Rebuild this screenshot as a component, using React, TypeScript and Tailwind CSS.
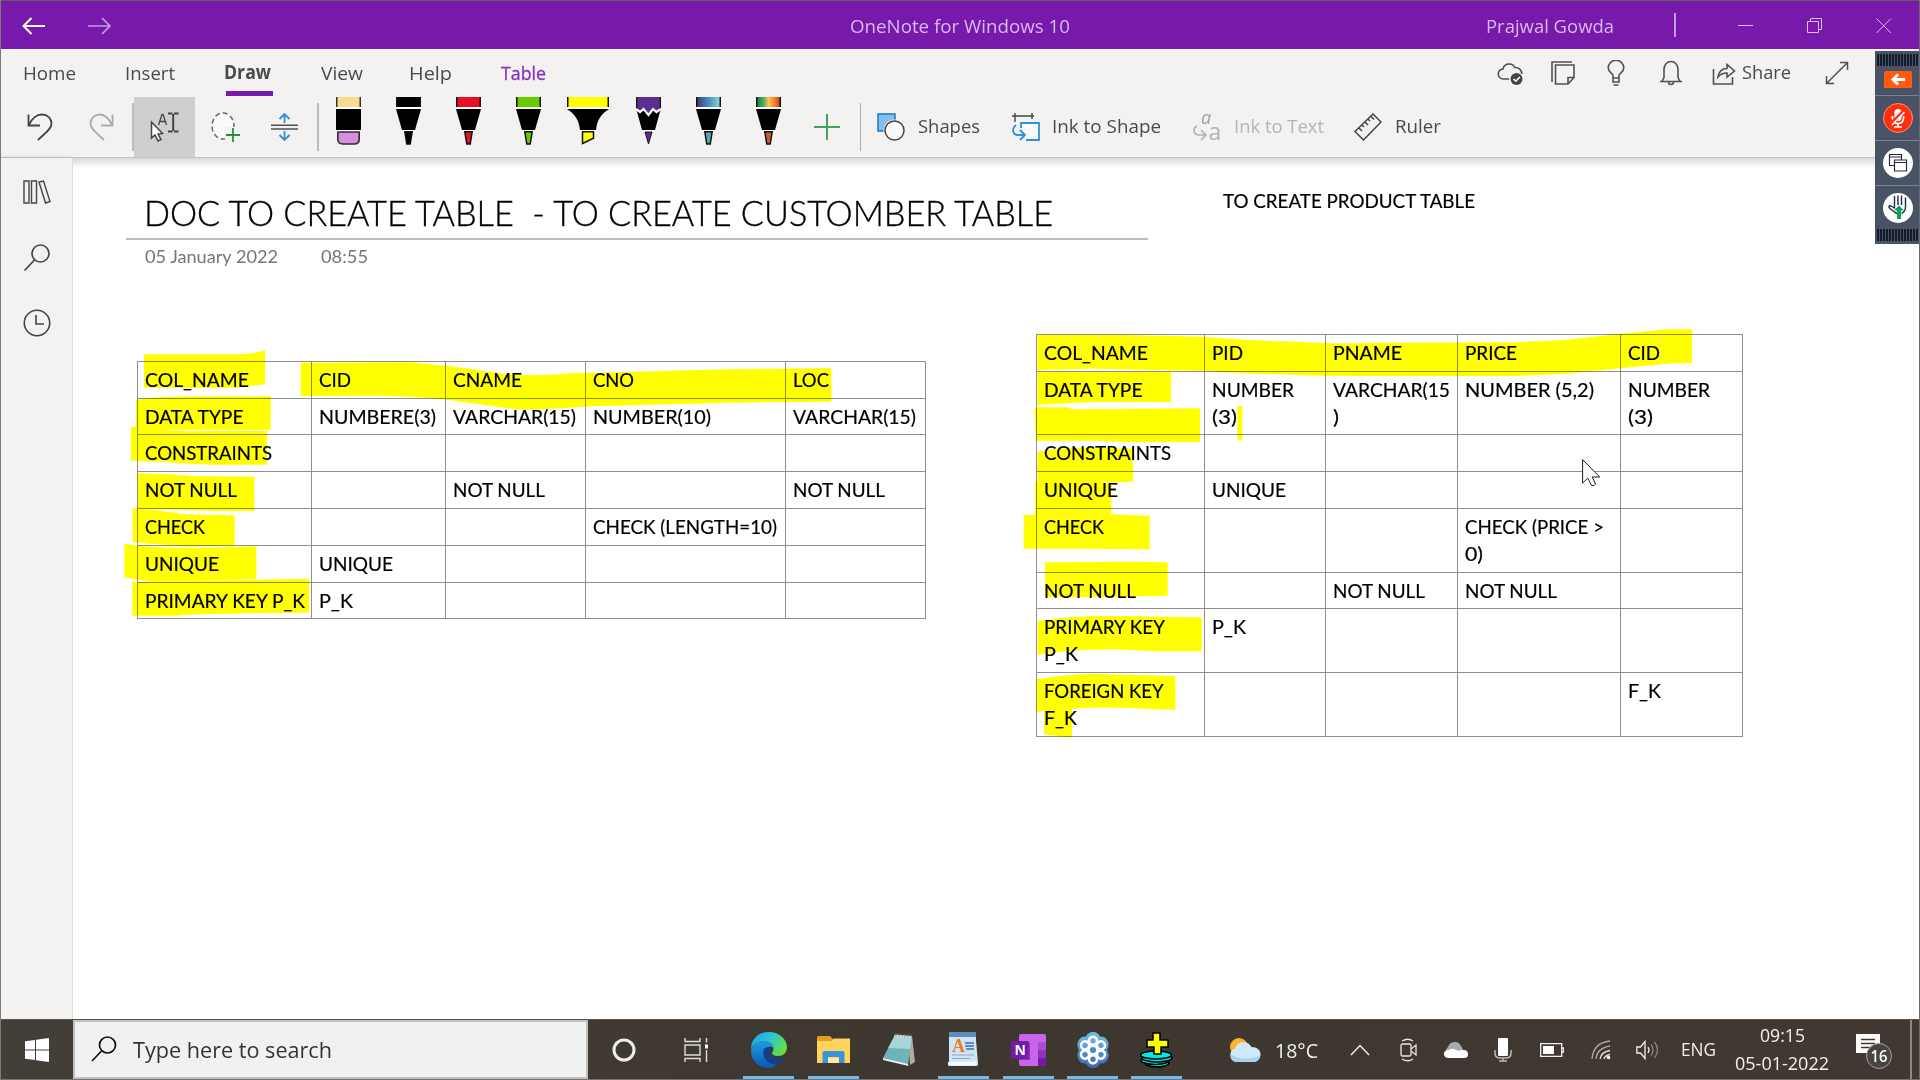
import React, { useLayoutEffect, useRef, useState } from "react";

const UI = "font-['Open_Sans','Noto_Sans',sans-serif]";
const NOTE = "font-['Lato','Noto_Sans',sans-serif]";

/* A single line of text condensed or widened to an exact advance width. */
function Fit({ w, className = "", children }: { w: number; className?: string; children: string }) {
  const ref = useRef<HTMLSpanElement>(null);
  const [scale, setScale] = useState(1);
  useLayoutEffect(() => {
    if (ref.current && ref.current.offsetWidth) {
      ref.current.style.transform = "none";
      setScale(w / ref.current.getBoundingClientRect().width);
    }
  }, [w, children]);
  return (
    <span className={"block shrink-0 " + className} style={{ width: w }}>
      <span ref={ref} className="block w-max origin-left whitespace-pre" style={{ transform: `scaleX(${scale})` }}>
        {children}
      </span>
    </span>
  );
}

function TitleBar() {
  return (
    <header className="flex h-[49px] shrink-0 items-center border-t border-[#5f5f5f] bg-[#7719aa] text-[#d9b8ec]">
      <svg className="ml-[22px] mt-px h-[18px] w-6" viewBox="0 0 24 18" fill="none" stroke="#fff" strokeWidth="2">
        <path d="M23 9H2M9.500 1L1.500 9l8 8" />
      </svg>
      <svg className="ml-[42px] mt-px h-[18px] w-6" viewBox="0 0 24 18" fill="none" stroke="#c79be0" strokeWidth="1.700">
        <path d="M0 9h22M14 1l8 8-8 8" />
      </svg>
      <Fit w={220} className="ml-[738px] mt-0.5 text-[18px]">OneNote for Windows 10</Fit>
      <Fit w={128} className="ml-[416px] mt-0.5 text-[18px]">Prajwal Gowda</Fit>
      <span className="ml-[60px] h-6 w-0.5 bg-[#c79be0]" />
      <svg className="ml-[62px] mt-0.5 h-4 w-4" viewBox="0 0 16 16" stroke="#dcc0ec"><path d="M0 7.500h15" /></svg>
      <svg className="ml-[53px] mt-0.5 h-4 w-4" viewBox="0 0 16 16" fill="none" stroke="#dcc0ec"><path d="M.5 3.500h11v11H.5zM3.500 3.500v-3h11v11h-3" /></svg>
      <svg className="ml-[53px] mt-0.5 h-4 w-4" viewBox="0 0 16 16" fill="none" stroke="#dcc0ec"><path d="M.5.5l14.500 14.500M15 .5L.5 15" /></svg>
    </header>
  );
}

function Tabs() {
  return (
    <div className="flex h-12 shrink-0 items-center text-[19px] text-[#4a4a4a]">
      <Fit w={53} className="ml-[23px]">Home</Fit>
      <Fit w={50} className="ml-[49px]">Insert</Fit>
      <div className="ml-[49px] flex h-full w-12 flex-col">
        <Fit w={47} className="mt-[10px] text-[19px] font-bold leading-[26px]">Draw</Fit>
        <span className="ml-[2px] mt-[6px] h-[5px] w-[47px] shrink-0 bg-[#7719aa]" />
      </div>
      <Fit w={42} className="ml-[49px]">View</Fit>
      <Fit w={43} className="ml-[46px]">Help</Fit>
      <Fit w={45} className="ml-[49px] text-[#8a2dc0] [-webkit-text-stroke:0.3px]">Table</Fit>
      <svg className="ml-[951px] h-6 w-[27px]" viewBox="0 0 27 24" fill="none" stroke="#505050" strokeWidth="1.600">
        <path d="M12 18H6.500a5 5 0 0 1-.6-10A6.500 6.500 0 0 1 18 6.500c3.500-.2 7 2.500 6.800 6.500" />
        <circle cx="19.500" cy="18" r="6" fill="#444" stroke="none" />
        <path d="M16.500 18l2.300 2.200 4-4.200" stroke="#fff" />
      </svg>
      <svg className="ml-[27px] h-6 w-6" viewBox="0 0 24 24" fill="none" stroke="#505050" strokeWidth="1.600">
        <path d="M1 21V1h20M4.500 4H23v12.500L17 23H4.500zM23 16.500h-6V23" />
      </svg>
      <svg className="ml-8 h-[26px] w-[18px]" viewBox="0 0 18 26" fill="none" stroke="#505050" strokeWidth="1.600">
        <path d="M6 18v-2.500C5.500 13 1.200 12 1.200 7.800a7.800 7.500 0 0 1 15.600 0c0 4.200-4.300 5.200-4.800 7.700V22H6v-4h6M6.500 25h5" />
      </svg>
      <svg className="ml-[34px] h-[26px] w-6" viewBox="0 0 24 26" fill="none" stroke="#505050" strokeWidth="1.600">
        <path d="M1 21.500h22M3 21.500l2-4V9a7 7.500 0 0 1 14 0v8.500l2 4M9.500 22a2.500 2.500 0 0 0 5 0" />
      </svg>
      <svg className="ml-[29px] h-[26px] w-6" viewBox="0 0 24 26" fill="none" stroke="#505050" strokeWidth="1.600">
        <path d="M1.500 9v15h19v-7M6 17c1-6 5-8.500 9-8.500V4.500L22.500 11 15 17v-4c-4 0-6.500 1-9 4z" />
      </svg>
      <Fit w={49} className="-mt-0.5 ml-[6px] text-[18px]">Share</Fit>
      <svg className="ml-[34px] h-6 w-6" viewBox="0 0 24 24" fill="none" stroke="#505050" strokeWidth="1.500">
        <path d="M1.500 22.500L22.500 1.500M15 1.500h7.500V9M1.500 15v7.500H9" />
      </svg>
    </div>
  );
}

function Pen({ fill, tip, className = "mr-[35px]" }: { fill: string; tip: string; className?: string }) {
  return (
    <svg className={"h-12 w-[25px] shrink-0 " + className} viewBox="0 0 25 48">
      <path d="M0 0h25v10H0z" fill="#111" />
      <path d="M1.500 0h22v10h-22z" fill={fill} />
      <path d="M0 10h25v1.800H0zM6 33h13v1.800H6z" fill="#fff" />
      <path d="M0 12h25l-6 21H6z" />
      <path d="M8.800 34.800h7.400l-2 12.200h-3.400z" fill={tip} stroke="#111" strokeWidth="1.500" />
    </svg>
  );
}

function Pens() {
  return (
    <div className="ml-[17px] flex h-full shrink-0 items-start">
      <svg className="mr-[35px] h-12 w-[25px]" viewBox="0 0 25 48">
        <path d="M0 0h25v10H0z" fill="#333" />
        <path d="M1.500 0h22v10h-22z" fill="#f8da90" />
        <path d="M0 10h25v2H0zM0 33h25v2H0z" fill="#fff" />
        <path d="M0 12h25v21H0z" />
        <path d="M1.800 35h21.400v7q0 5-5 5H6.800q-5 0-5-5z" fill="#d490da" stroke="#352838" strokeWidth="1.600" />
      </svg>
      <Pen fill="#000" tip="#000" />
      <Pen fill="#e81123" tip="#e81123" />
      <Pen fill="#66cc00" tip="#66cc00" className="mr-[26px]" />
      <svg className="mr-[27px] h-12 w-[42px]" viewBox="0 0 42 48">
        <path d="M0 0h42v10H0z" fill="#111" />
        <path d="M1.500 0h39v10h-39z" fill="#ff0" />
        <path d="M0 10h42v2H0zM13 33h16v2H13z" fill="#fff" />
        <path d="M0 12h42c-8 5-12 11-13 21H13C12 23 8 17 0 12z" />
        <path d="M15.500 34.800h11v6.500l-11 5.200z" fill="#ff0" stroke="#111" strokeWidth="1.500" />
      </svg>
      <svg className="mr-[35px] h-12 w-[25px]" viewBox="0 0 25 48">
        <path d="M0 11h25l-6 22H6z" />
        <path d="M0 0h25v14l-4.500 1-3.500-3-4.500 6-5-6L4 15l-4-1z" fill="#5c2d91" />
        <path d="M.5 0v12M24.500 0v12" stroke="#111" strokeWidth="1.500" />
        <path d="M0 12l4 3 3.500-3 5 6 4.500-6 3.500 3 4.500-3" fill="none" stroke="#fff" strokeWidth="2.200" />
        <path d="M6 33h13v2H6z" fill="#fff" />
        <path d="M9 35h7l-3.500 12z" fill="#5c2d91" stroke="#20102f" />
      </svg>
      <svg width="0" height="0" className="absolute">
        <defs>
          <linearGradient id="galaxy"><stop offset="0" stopColor="#4a3a72" /><stop offset=".4" stopColor="#3f7fb5" /><stop offset="1" stopColor="#7fd4d8" /></linearGradient>
          <linearGradient id="rainbow"><stop offset="0" stopColor="#0a8a50" /><stop offset=".3" stopColor="#5fae60" /><stop offset=".5" stopColor="#fbc550" /><stop offset=".75" stopColor="#f58a2a" /><stop offset="1" stopColor="#c84a20" /></linearGradient>
        </defs>
      </svg>
      <Pen fill="url(#galaxy)" tip="#55aab8" />
      <Pen fill="url(#rainbow)" tip="#b9603a" />
    </div>
  );
}

function Toolbar() {
  return (
    <div className="flex h-[60px] shrink-0 items-center text-[19px] text-[#4a4a4a]">
      <svg className="ml-[27px] h-7 w-[26px]" viewBox="0 0 26 28" fill="none" stroke="#444" strokeWidth="1.800">
        <path d="M1.500 1.500V12.500H13M2 12C4.500 6 9.500 1.500 15 1.500c5.500 0 9.500 4 9.500 9 0 6-7 10-13.500 16.500" />
      </svg>
      <svg className="ml-[36px] h-7 w-[26px]" viewBox="0 0 26 28" fill="none" stroke="#ababab" strokeWidth="1.800">
        <path d="M23.500 1.500V12.500H12M23 12C20.500 6 15.500 1.500 11 1.500c-5.500 0-9.500 4-9.500 9 0 6 7 10 13.500 16.500" />
      </svg>
      <span className="ml-[17px] h-12 w-0.5 bg-[#bdbdbd]" />
      <div className="flex h-full w-[61px] items-center justify-center bg-[#d0cfce]">
        <svg className="h-[30px] w-[30px]" viewBox="0 0 30 30" fill="none" stroke="#444" strokeWidth="1.500">
          <path d="M8.500 13L12 2.500h1L16.500 13M9.700 9.500h5.500" strokeWidth="1.300" />
          <path d="M18 1.500h4.500M24 1.500h4.500M18 19.500h4.500M24 19.500h4.500M23.200 2v17" strokeWidth="2" />
          <path d="M1.500 10v16l3.500-3 3 6 3-1.500-3-5.500 4.500-.5z" fill="#fff" />
        </svg>
      </div>
      <svg className="ml-4 h-[30px] w-[30px]" viewBox="0 0 30 30" fill="none">
        <ellipse cx="12" cy="14" rx="11" ry="13" fill="#fafafa" stroke="#666" strokeWidth="1.500" strokeDasharray="5 3" />
        <path d="M14 15h16v15H14z" fill="#f3f2f1" />
        <path d="M22 16v14M15 23h14" stroke="#229044" strokeWidth="1.800" />
      </svg>
      <svg className="ml-[30px] h-7 w-[27px]" viewBox="0 0 27 28" fill="none" stroke="#2c93d5" strokeWidth="1.800">
        <path d="M13.500 10V1M8.500 6l5-5 5 5M13.500 18v9M8.500 22l5 5 5-5" />
        <path d="M0 12.200h27M0 16h27" stroke="#505050" strokeWidth="1.600" />
      </svg>
      <span className="ml-[19px] h-12 w-0.5 bg-[#bdbdbd]" />
      <Pens />
      <svg className="-ml-0.5 h-[26px] w-[26px]" viewBox="0 0 26 26" stroke="#3fa55d" strokeWidth="2"><path d="M0 13h26M13 0v26" /></svg>
      <span className="ml-[20px] h-12 w-px bg-[#b0b0b0]" />
      <svg className="ml-4 h-7 w-7" viewBox="0 0 28 28">
        <path d="M1 1h17v17H1z" fill="#83beec" stroke="#2176c0" strokeWidth="1.500" />
        <ellipse cx="17.500" cy="17.500" rx="11" ry="11" fill="#f3f2f1" />
        <ellipse cx="17.500" cy="17.500" rx="9.500" ry="9.500" fill="#fafafa" stroke="#444" strokeWidth="1.500" />
      </svg>
      <Fit w={62} className="ml-[13px] -mt-px">Shapes</Fit>
      <svg className="ml-[32px] h-7 w-7" viewBox="0 0 28 28" fill="none" stroke="#2c93d5" strokeWidth="1.800">
        <path d="M0 3h22M3 0v9M20 0v6" stroke="#444" strokeWidth="1.400" />
        <path d="M10 15V10h17v17H14" fill="#fafafa" stroke="none" />
        <path d="M9 15V10h18v17H14" />
        <path d="M4 12c-5 4-3 10 2 10h6M8 17l5 5-5 5" />
      </svg>
      <Fit w={109} className="ml-3 -mt-px">Ink to Shape</Fit>
      <svg className="ml-[32px] h-7 w-7 overflow-visible" viewBox="0 0 28 28" fill="none" stroke="#b3b3b3" strokeWidth="2">
        <path d="M4 13c-5 3-3 9 2 9h6M8 17l5 5-5 5" strokeWidth="1.700" />
        <text x="8" y="11" fill="#a0a0a0" stroke="none" fontSize="18" fontStyle="italic">a</text>
        <text x="15.500" y="27" fill="#b3b3b3" stroke="none" fontSize="23">a</text>
      </svg>
      <Fit w={90} className="ml-[13px] -mt-px text-[#b5b5b5]">Ink to Text</Fit>
      <svg className="ml-[30px] h-7 w-7" viewBox="0 0 28 28" fill="none" stroke="#444" strokeWidth="1.500">
        <path d="M1 18.500L19 1l8 8-17.500 18zM5 15l3 3M8 12l2 2M11 9l3 3M14 6l2 2M17 3.500l3 3" />
      </svg>
      <Fit w={46} className="ml-[13px] -mt-px">Ruler</Fit>
    </div>
  );
}

function Sidebar() {
  return (
    <aside className="flex w-[73px] shrink-0 flex-col items-start border-l border-r border-l-[#8a8a8a] border-r-[#dcdbda] bg-[#f3f2f1] pl-[22px] pt-[22px] shadow-[0_0_4px_rgba(0,0,0,0.15)]">
      <svg className="h-6 w-7" viewBox="0 0 28 24" fill="none" stroke="#444" strokeWidth="1.400">
        <path d="M1 1h5v22H1zM8.500 1h5v22h-5zM16 2l4.500-1 6.500 20.500-4.500 1.500z" />
      </svg>
      <svg className="mt-10 h-7 w-7" viewBox="0 0 28 28" fill="none" stroke="#444" strokeWidth="1.700">
        <circle cx="17.500" cy="9.500" r="8.500" /><path d="M11.500 16L1.500 26.500" />
      </svg>
      <svg className="mt-[37px] h-7 w-7" viewBox="0 0 28 28" fill="none" stroke="#444" strokeWidth="1.600">
        <circle cx="14" cy="14" r="12.700" /><path d="M13 6v9h8" />
      </svg>
    </aside>
  );
}

const WIDTHS: Record<string, number> = {
  COL_NAME: 104, CID: 32, CNAME: 69, CNO: 41, LOC: 36, "DATA TYPE": 98.5, "NUMBERE(3)": 117,
  "VARCHAR(15)": 123, "NUMBER(10)": 118, CONSTRAINTS: 127, "NOT NULL": 92, CHECK: 60,
  "CHECK (LENGTH=10)": 184, UNIQUE: 74, "PRIMARY KEY P_K": 160, P_K: 34, PID: 31, PNAME: 69,
  PRICE: 52, NUMBER: 82, "(3)": 25, "VARCHAR(15": 117, ")": 6, "NUMBER (5,2)": 129,
  "CHECK (PRICE >": 139, "0)": 18, "PRIMARY KEY": 121, "FOREIGN KEY": 119.5, F_K: 33,
};

const CUSTOMER = [
  ["COL_NAME", "CID", "CNAME", "CNO", "LOC"],
  ["DATA TYPE", "NUMBERE(3)", "VARCHAR(15)", "NUMBER(10)", "VARCHAR(15)"],
  ["CONSTRAINTS", "", "", "", ""],
  ["NOT NULL", "", "NOT NULL", "", "NOT NULL"],
  ["CHECK", "", "", "CHECK (LENGTH=10)", ""],
  ["UNIQUE", "UNIQUE", "", "", ""],
  ["PRIMARY KEY P_K", "P_K", "", "", ""],
];

const PRODUCT = [
  ["COL_NAME", "PID", "PNAME", "PRICE", "CID"],
  ["DATA TYPE", "NUMBER\n(3)", "VARCHAR(15\n)", "NUMBER (5,2)", "NUMBER\n(3)"],
  ["CONSTRAINTS", "", "", "", ""],
  ["UNIQUE", "UNIQUE", "", "", ""],
  ["CHECK", "", "", "CHECK (PRICE >\n0)", ""],
  ["NOT NULL", "", "NOT NULL", "NOT NULL", ""],
  ["PRIMARY KEY\nP_K", "P_K", "", "", ""],
  ["FOREIGN KEY\nF_K", "", "", "", "F_K"],
];

function NoteTable({ rows, layout }: { rows: string[][]; layout: string }) {
  return (
    <div className={"grid w-max border-l border-t border-[#8f8f8f] text-[19.500px] leading-[27px] text-black [-webkit-text-stroke:0.2px] " + layout}>
      {rows.flat().map((cell, i) => (
        <div key={i} className="border-b border-r border-[#8f8f8f] pl-[6.600px] pt-[3.500px]">
          {cell && cell.split("\n").map((line) => <Fit key={line} w={WIDTHS[line]}>{line}</Fit>)}
        </div>
      ))}
    </div>
  );
}

/* Highlighter strokes and pointer, laid over the note canvas. */
function Ink() {
  return (
    <>
      <svg className="pointer-events-none absolute left-0 top-0 h-[861px] w-[1847px] mix-blend-multiply" viewBox="73 158 1847 861" fill="#ffff00">
        <g transform="translate(110 330) scale(.33333)">
          <path d="M102 73H380Q440 70 465 60V163Q430 166 380 173H102z" />
          <path d="M572 98L900 97Q1000 105 1090 118Q1180 134 1250 136Q1340 134 1390 129L1450 128L1850 118L2164 114V215L1860 218L1440 229Q1300 240 1220 238Q1120 225 1000 208Q900 197 800 197L572 198z" />
          <path d="M78 210Q130 200 240 199H482V299H180Q120 303 85 313H78z" />
          <path d="M63 291H82Q130 300 230 304L471 303V404H300Q200 400 170 396L63 392z" />
          <path d="M83 430Q200 433 240 438L433 440V543H310Q200 538 83 536z" />
          <path d="M68 534Q180 545 225 553L374 556V646L240 650Q150 645 68 636z" />
          <path d="M43 641Q120 652 240 655L439 649V746L140 757Q90 750 43 742z" />
          <path d="M67 756L400 750L597 746V848L420 850Q250 852 200 857H67z" />
        </g>
        <g transform="translate(1010 320) scale(.33333)">
          <path d="M82 45H360L583 50Q700 62 870 65Q950 72 1110 68L1510 67L1660 60L1830 42L1970 28H2046V129L1990 130L1830 145L1660 162L1510 168H1110L940 167L700 160L583 153L250 146L82 150z" />
          <path d="M82 156H483V246H270Q130 250 82 255z" />
          <path d="M74 262H170L190 268L570 265V366H420Q340 366 250 362H78z" />
          <path d="M682 258H697V361H682z" />
          <path d="M82 395Q150 382 240 383L369 386V485L270 488L304 494V583L419 587V688L180 686H41V585H76V486H82z" />
          <path d="M105 727L370 725L473 727V827L300 831H105z" />
          <path d="M83 903Q180 888 300 888L575 892V994H430Q250 980 83 1004z" />
          <path d="M80 1078Q200 1058 300 1063L496 1068V1169L430 1168Q300 1158 186 1166V1251H160L102 1243V1172L80 1176z" />
        </g>
      </svg>
      <svg className="pointer-events-none absolute left-[1509px] top-[301px] h-[28px] w-[20px]" viewBox="0 0 20 28">
        <path d="M.6.6v23.500l5.200-5 3.700 7.400h2.500l1.500-1.500-3.300-7h7.500z" fill="#fff" stroke="#1a1a30" />
      </svg>
    </>
  );
}

function Canvas() {
  return (
    <main className={"relative flex min-w-0 flex-1 bg-white " + NOTE}>
      <section className="w-[1075px] shrink-0 pt-[23px]">
        <div className="ml-[53px] h-[59px] w-[1022px] border-b-2 border-[#bdbdbd] pl-[18px]">
          <Fit w={909} className="text-[35px] font-light leading-[62px] text-black [-webkit-text-stroke:0.35px]">DOC TO CREATE TABLE  - TO CREATE CUSTOMBER TABLE</Fit>
        </div>
        <div className="ml-[72px] mt-[5px] flex text-[17.500px] leading-[24px] text-[#757575]">
          <Fit w={133}>05 January 2022</Fit>
          <Fit w={47} className="ml-[43px]">08:55</Fit>
        </div>
        <div className="ml-[64px] mt-[92px]">
          <NoteTable rows={CUSTOMER} layout="grid-cols-[174px_134px_140px_200px_140px] grid-rows-[37px_36px_37px_37px_37px_37px_36px]" />
        </div>
      </section>
      <section className="-ml-[112px] pt-[29px]">
        <Fit w={252} className="ml-[187px] text-[19.500px] leading-[27px] text-black [-webkit-text-stroke:0.2px]">TO CREATE PRODUCT TABLE</Fit>
        <div className="mt-[120px]">
          <NoteTable rows={PRODUCT} layout="grid-cols-[168px_121px_132px_163px_122px] grid-rows-[37px_63px_37px_37px_64px_36px_64px_64px]" />
        </div>
      </section>
      <Ink />
      <div className="pointer-events-none absolute inset-x-0 top-0 h-2.5 bg-gradient-to-b from-black/15 to-transparent" />
    </main>
  );
}

const STRIPES = "ml-[2px] h-3 w-[42px] bg-[repeating-linear-gradient(90deg,#141c2a_0_2px,#495266_2px_3px)]";

function MeetingDock() {
  return (
    <div className="absolute left-[1875px] top-[51px] flex h-[193px] w-11 flex-col bg-[#4a5366] pt-[3px]">
      <div className={STRIPES} />
      <div className="flex h-[30px] items-center justify-center border-b border-[#76839a] pb-[5px] pl-[2px] pt-[2px]">
        <svg className="h-[17px] w-7" viewBox="0 0 28 17"><rect width="28" height="17" rx="1.500" fill="#ff5a12" /><path d="M21 8.500H9M14 3.500l-5 5 5 5" fill="none" stroke="#fff" strokeWidth="2.800" /></svg>
      </div>
      <div className="flex h-[45px] items-center justify-center border-b border-[#76839a] pl-[2px]">
        <svg className="h-[30px] w-[30px]" viewBox="0 0 30 30">
          <circle cx="15" cy="15" r="14.500" fill="#ff3010" stroke="#ff8a70" />
          <rect x="11.500" y="6" width="7" height="12" rx="3.500" fill="#fff" />
          <path d="M9.500 13v2.500a5.500 5 0 0 0 11 0V13M15 20.500V24M11 24h8" fill="none" stroke="#fff" strokeWidth="1.700" />
          <path d="M8 21L21 8" stroke="#ff3010" strokeWidth="3.500" /><path d="M9 22L21.500 9" stroke="#fff" strokeWidth="1.500" />
        </svg>
      </div>
      <div className="flex h-[45px] items-center justify-center border-b border-[#76839a] pl-[2px]">
        <svg className="h-[30px] w-[30px]" viewBox="0 0 30 30" stroke="#252a45" strokeWidth="1.200">
          <circle cx="15" cy="15" r="15" fill="#fff" stroke="none" />
          <path d="M6.500 6.500h12v11h-12zM6.500 9h12" fill="#fff" /><path d="M11.500 12h12v11h-12zM11.500 14.500h12" fill="#fff" />
        </svg>
      </div>
      <div className="flex h-[43px] items-center justify-center pl-[2px]">
        <svg className="h-[30px] w-[30px]" viewBox="0 0 30 30" fill="none" stroke="#252a45" strokeWidth="1.400">
          <circle cx="15" cy="15" r="15" fill="#fff" stroke="none" />
          <path d="M11.500 3v12l-3.500-2c-2-1-3 1-1 2.500l5 4 3 1.500M15 2.500V12M18.500 2.500V12M22.500 4.500V14c0 4-2 5.500-4 6.500" />
          <path d="M14 26v-8.500h-3l5-5 5 5h-3V26z" fill="#00a651" stroke="none" />
        </svg>
      </div>
      <div className={STRIPES} />
    </div>
  );
}

function AppButton({ active, ml, children }: { active?: boolean; ml: string; children: React.ReactNode }) {
  return (
    <div className={"relative flex h-full w-[51px] shrink-0 items-center justify-center " + ml}>
      {children}
      {active && <span className="absolute inset-x-0 bottom-0 h-[3px] bg-[#76b9ed]" />}
    </div>
  );
}

function TaskbarApps() {
  return (
    <div className="flex h-full items-center">
      <svg className="ml-[23px] h-6 w-6" viewBox="0 0 24 24" fill="none"><circle cx="12" cy="12" r="10" stroke="#eee" strokeWidth="3" /></svg>
      <svg className="ml-[48px] h-6 w-[26px]" viewBox="0 0 26 24" fill="none" stroke="#ddd" strokeWidth="1.400">
        <path d="M1 0v3.500h15V0M1 7h15v10H1zM1 24v-3.500h15V24M22.500 0v4.500M22.500 12v12" /><path d="M22.500 6.500v4" stroke="#fff" strokeWidth="3" />
      </svg>
      <AppButton active ml="ml-[33px]">
        <svg className="h-9 w-9" viewBox="0 0 36 36">
          <defs>
            <linearGradient id="eg" x1="0" y1="0" x2="1" y2=".5"><stop stopColor="#1d9fe0" /><stop offset=".5" stopColor="#2cc3d8" /><stop offset="1" stopColor="#62de4a" /></linearGradient>
            <linearGradient id="eb" x1="0" y1="0" x2="0" y2="1"><stop stopColor="#1e9de0" /><stop offset="1" stopColor="#0b59b0" /></linearGradient>
          </defs>
          <path d="M0 18C0 6 8 0 18 0c11 0 18 8 18 15 0 6-4 9-9 9-4 0-6-1.500-6-3 0-1 1.500-2 1.500-4.500C22.500 12 18 9 13 9 6 9 1 13 0 18z" fill="url(#eg)" />
          <path d="M0 19C1 12 7 9 13 9c6 0 9.500 3.500 9.500 7.500-2-3-9-2.500-9 4.500 0 7 6 12 13 11C23 35 20 36 17 36 8 36 0 29 0 19z" fill="url(#eb)" />
          <path d="M13 17c-3 8 3 15 12 15.500 4-1 7-4 8.500-6.500.3-.6-.3-1-.8-.8C28 27.500 21 26.500 19 21c-.7-2 0-4 1-5-3-1-6-.5-7 1z" fill="#123f88" />
        </svg>
      </AppButton>
      <AppButton active ml="ml-[14px]">
        <svg className="h-7 w-[33px]" viewBox="0 0 33 28">
          <path d="M0 1.500Q0 0 1.500 0H13l3 3H32q1 0 1 1v22H0z" fill="#e09f1c" /><path d="M0 5h14l3-2.500h16V27H0z" fill="#ffd35c" />
          <path d="M5.500 27V17q0-2 2-2h18q2 0 2 2v10H22v-6H11v6z" fill="#3a94dc" /><path d="M11 22h11v5H11z" fill="#ffe9a0" />
        </svg>
      </AppButton>
      <AppButton ml="ml-[14px]">
        <svg className="h-[33px] w-8" viewBox="0 0 32 33">
          <path d="M25 3h4l3 26-5 3z" fill="#b3ab98" />
          <path d="M12 2l17 2-4 28L0 25z" fill="#6fb3bb" />
          <path d="M12 2l17 2-2 12L5 15z" fill="#b5dfe2" opacity=".8" />
          <path d="M0 25l25 6 .500 2L0 27z" fill="#e9f3f3" />
          <path d="M12 1.500L29 3l-.500 2.500L11 4z" fill="#dce5e5" />
          <path d="M13 0v4M16 .3v4M19 .6v4M22 .8v4M25 1v4M28 1.500v4" stroke="#777" strokeWidth=".8" />
        </svg>
      </AppButton>
      <AppButton active ml="ml-[14px]">
        <svg className="h-[35px] w-[31px]" viewBox="0 0 31 35">
          <path d="M1 0h27v8l2 23q0 3-3 3H1q-2-1 0-4z" fill="#cfe4f6" /><path d="M1 0h27v5H1z" fill="#5d8cb8" /><path d="M0 30l28-.5 2 4H2q-3-1-2-3.500z" fill="#f5fafe" />
          <text x="4" y="20" fontSize="18" fontWeight="bold" fill="#ee7d1b" className="font-['Liberation_Serif',serif]">A</text>
          <path d="M17 11h9M17 14h9M18 17h8" stroke="#3f70ad" strokeWidth="1.600" /><path d="M4 23h22M4 26.500h18" stroke="#88a6c4" />
        </svg>
      </AppButton>
      <AppButton active ml="ml-[14px]">
        <svg className="h-8 w-[35px]" viewBox="0 0 35 32">
          <rect x="8" width="27" height="32" rx="2" fill="#ca64ea" /><path d="M27 8h8v8h-8z" fill="#ae4bd5" /><path d="M27 16h8v8h-8z" fill="#9332bf" /><path d="M27 24h8v6q0 2-2 2h-6z" fill="#7719aa" />
          <path d="M8 7h8q3 0 3 3v16H8z" fill="#8d35b5" /><rect y="7" width="17.500" height="18" rx="1.500" fill="#7719aa" />
          <text x="3.500" y="21" fontSize="14" fontWeight="bold" fill="#fff">N</text>
        </svg>
      </AppButton>
      <AppButton active ml="ml-[13px]">
        <svg className="h-9 w-9" viewBox="0 0 36 36">
          <defs><linearGradient id="gt" gradientUnits="userSpaceOnUse" x1="0" y1="0" x2="0" y2="36"><stop stopColor="#6cc3e4" /><stop offset="1" stopColor="#3d67b4" /></linearGradient></defs>
          <path d="M18 0q5 0 7 4.500 5-.5 7.500 4Q35 13 32 18q3 5 .5 9.500-2.500 4.500-7.500 4Q23 36 18 36t-7-4.500q-5 .5-7.500-4Q1 23 4 18 1 13 3.500 8.500 6 4 11 4.500 13 0 18 0z" fill="url(#gt)" />
          {[0, 60, 120, 180, 240, 300].map((a) => <circle key={a} cx="18" cy="8.800" r="4" fill="none" stroke="#fff" strokeWidth="2.600" transform={`rotate(${a} 18 18)`} />)}
          <circle cx="18" cy="18" r="4.200" fill="#438fcb" stroke="#fff" strokeWidth="2.200" />
        </svg>
      </AppButton>
      <AppButton active ml="ml-[13px]">
        <svg className="h-9 w-9" viewBox="0 0 36 36">
          <g fill="#00e8e8" stroke="#000" strokeWidth="1.600">
            <ellipse cx="18" cy="31" rx="12" ry="4" /><ellipse cx="16" cy="28.500" rx="14" ry="4" /><ellipse cx="18" cy="26" rx="15" ry="4" /><ellipse cx="17" cy="23" rx="15.500" ry="4" />
          </g>
          <path d="M14 1h7v7h8v7h-7v7h-7v-7H8V8h6z" fill="#ff0" stroke="#000" strokeWidth="1.500" />
        </svg>
      </AppButton>
    </div>
  );
}

function Tray() {
  return (
    <div className="flex h-full items-center text-[#f2f2f2]">
      <svg className="ml-[47px] h-6 w-8" viewBox="0 0 32 24">
        <circle cx="10" cy="9" r="9" fill="#f7b52c" />
        <path d="M7 24a7 7 0 0 1-1-13.500A9 9 0 0 1 22.500 9C28 9 32 12 31.500 17c-.4 4-3 7-7 7z" fill="#cfe8fb" /><path d="M7 24a7 7 0 0 1-5-8c5 5 18 6 29 2-.8 3.500-3 6-6.500 6z" fill="#a5d2f3" />
      </svg>
      <Fit w={43} className="ml-[14px] mt-[3px] text-[19.500px]">18°C</Fit>
      <svg className="ml-[32px] h-3 w-5" viewBox="0 0 20 12" fill="none" stroke="#eee" strokeWidth="1.500"><path d="M1 11l9-9.500 9 9.500" /></svg>
      <svg className="ml-[30px] h-6 w-[18px]" viewBox="0 0 18 24" fill="none" stroke="#e6e6e6" strokeWidth="1.300">
        <rect x="1" y="6" width="10" height="12" rx="1.500" /><path d="M11 11l5-4v10l-5-4M2 3q6-3.500 11 0M2 21q6 3.500 11 0" />
      </svg>
      <svg className="ml-[25px] h-4 w-[26px]" viewBox="0 0 26 16"><path d="M4 12a5 5 0 0 1 1-7A7 7 0 0 1 18 4l2 3L8 15z" fill="#aaa" /><path d="M6 16q-5 0-5-4t5-4q2-2 5-1l5 2q2-2 5-1 4 0 4 4.500Q25 16 21 16z" fill="#fff" /></svg>
      <svg className="ml-[25px] h-6 w-[18px]" viewBox="0 0 18 24"><rect x="4" width="10" height="18" rx="1" fill="#fff" /><path d="M1 12v3q0 5 5 5h6q5 0 5-5v-3M9 20v3M5 23h8" fill="none" stroke="#bbb" strokeWidth="1.500" /></svg>
      <svg className="ml-[28px] h-[14px] w-6" viewBox="0 0 24 14"><path d="M.7.7h21v12.600h-21zM22 5h1.500v4H22" fill="none" stroke="#eee" strokeWidth="1.300" /><path d="M3 3h11v8H3z" fill="#fff" /></svg>
      <svg className="ml-[27px] h-5 w-5" viewBox="0 0 20 20" fill="none" strokeWidth="1.300">
        <path d="M1 19Q2 3 19 1M5 19Q6 8 19 6" stroke="#aaa" /><path d="M9 19Q10 12 19 10.500M13 19q1-3.500 6-4.500" stroke="#e6e6e6" /><circle cx="17.500" cy="17.500" r="1.800" fill="#fff" />
      </svg>
      <svg className="ml-[25px] h-5 w-[23px]" viewBox="0 0 23 20" fill="none" stroke="#eee" strokeWidth="1.300"><path d="M.8 7h3.700L9 1.500v17L4.500 13H.8z" /><path d="M12 7q2 3 0 6" /><path d="M15 4.500q4 5.500 0 11M18.500 2q6 8 0 16" stroke="#8a8580" /></svg>
      <Fit w={35} className="ml-[22px] text-[18px]">ENG</Fit>
      <div className="ml-[19px] flex w-[94px] flex-col items-center text-[18px] leading-[28px]">
        <Fit w={45} className="-mt-0.5">09:15</Fit>
        <Fit w={94}>05-01-2022</Fit>
      </div>
      <svg className="ml-[27px] mt-[5px] h-9 w-[38px]" viewBox="0 0 38 36">
        <path d="M0 0h24v19h-9l-4 5v-5H0z" fill="#fff" /><path d="M5 5.500h14M5 9.500h14M5 13.500h9" stroke="#40372f" strokeWidth="1.300" />
        <circle cx="23" cy="22" r="12.500" fill="#48443f" stroke="#a5a29e" />
        <text x="14.500" y="28" fontSize="17" fontWeight="600" fill="#fff" textLength="17" lengthAdjust="spacingAndGlyphs">16</text>
      </svg>
      <span className="ml-[16px] h-full w-0.5 bg-[#8b8885]" />
    </div>
  );
}

export default function App() {
  return (
    <div className={"relative flex h-[1080px] w-[1920px] flex-col overflow-hidden bg-[#f3f2f1] " + UI}>
      <TitleBar />
      <Tabs />
      <Toolbar />
      <div className="h-px shrink-0 bg-[#c6c5c4]" />
      <div className="flex min-h-0 flex-1">
        <Sidebar />
        <Canvas />
      </div>
      <footer className="flex h-[61px] shrink-0 border-b border-t border-b-[#77736f] border-t-[#58534e] bg-gradient-to-r from-[#443e38] via-[#3e372f] to-[#403831]">
        <div className="flex w-[73px] items-center pl-[25px]">
          <svg className="h-6 w-6" viewBox="0 0 24 24" fill="#fff"><path d="M0 3.300L10 2v9.500H0zM11 1.800L24 0v11.500H11zM0 12.500h10V22L0 20.700zM11 12.500h13V24l-13-1.800z" /></svg>
        </div>
        <div className="flex w-[515px] items-center border-2 border-[#c0c0c0] bg-[#f1f1f1] pl-[16px] text-[#333]">
          <svg className="-mt-0.5 h-[26px] w-[26px]" viewBox="0 0 26 26" fill="none" stroke="#111" strokeWidth="1.700"><circle cx="16.500" cy="9" r="8" /><path d="M10.500 15L1 25" /></svg>
          <Fit w={199} className="ml-[16px] mt-[3px] text-[21px]">Type here to search</Fit>
        </div>
        <div className="w-px" />
        <TaskbarApps />
        <Tray />
      </footer>
      <MeetingDock />
      <div className="pointer-events-none absolute inset-y-0 right-0 w-px bg-[#6a6a6a]" />
      <div className="pointer-events-none absolute inset-y-0 left-0 w-px bg-[#7a7a7a]" />
    </div>
  );
}
